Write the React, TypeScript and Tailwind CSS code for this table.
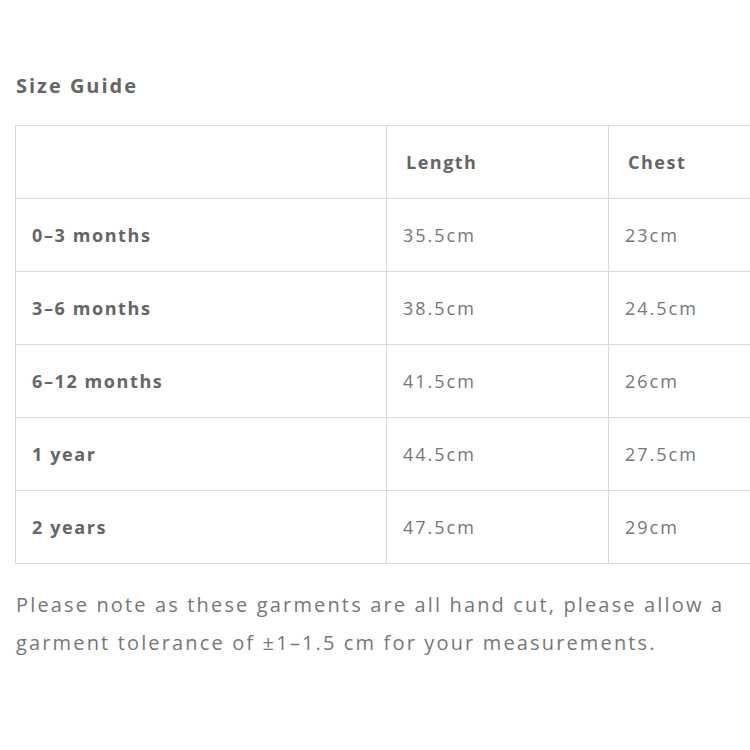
import React from "react";

const rows = [
  ["0–3 months", "35.5cm", "23cm"],
  ["3–6 months", "38.5cm", "24.5cm"],
  ["6–12 months", "41.5cm", "26cm"],
  ["1 year", "44.5cm", "27.5cm"],
  ["2 years", "47.5cm", "29cm"],
];

export default function App() {
  return (
    <div
      className="w-[750px] h-[750px] overflow-hidden bg-white pl-4 pt-[72px]"
      style={{ fontFamily: '"Open Sans", "Liberation Sans", sans-serif' }}
    >
      <h2 className="text-[20px] leading-[28px] font-bold text-[#666] tracking-[2px]">Size Guide</h2>
      <div className="mt-[25px] -ml-px w-[735px] overflow-hidden">
        <table className="w-[816px] border-collapse table-fixed">
          <colgroup>
            <col className="w-[371px]" />
            <col className="w-[222px]" />
            <col className="w-[223px]" />
          </colgroup>
          <thead>
            <tr className="h-[73px]">
              <th className="border border-[#d9d9d9]"></th>
              <th className="border border-[#d9d9d9] pl-[19px] pr-4 text-left text-[18px] font-bold text-[#666] tracking-[1.5px]">Length</th>
              <th className="border border-[#d9d9d9] pl-[19px] pr-4 text-left text-[18px] font-bold text-[#666] tracking-[1.5px]">Chest</th>
            </tr>
          </thead>
          <tbody>
            {rows.map((r) => (
              <tr key={r[0]} className="h-[73px]">
                <td className="border border-[#d9d9d9] px-4 text-[18px] font-bold text-[#666] tracking-[1.6px]">{r[0]}</td>
                <td className="border border-[#d9d9d9] px-4 text-[18px] text-[#777] tracking-[2px]">{r[1]}</td>
                <td className="border border-[#d9d9d9] px-4 text-[18px] text-[#777] tracking-[2px]">{r[2]}</td>
              </tr>
            ))}
          </tbody>
        </table>
      </div>
      <p className="mt-[22px] w-[734px] text-[20px] leading-[38px] text-[#777] tracking-[2.15px]">
        Please note as these garments are all hand cut, please allow a garment tolerance of ±1–1.5 cm for your measurements.
      </p>
    </div>
  );
}
